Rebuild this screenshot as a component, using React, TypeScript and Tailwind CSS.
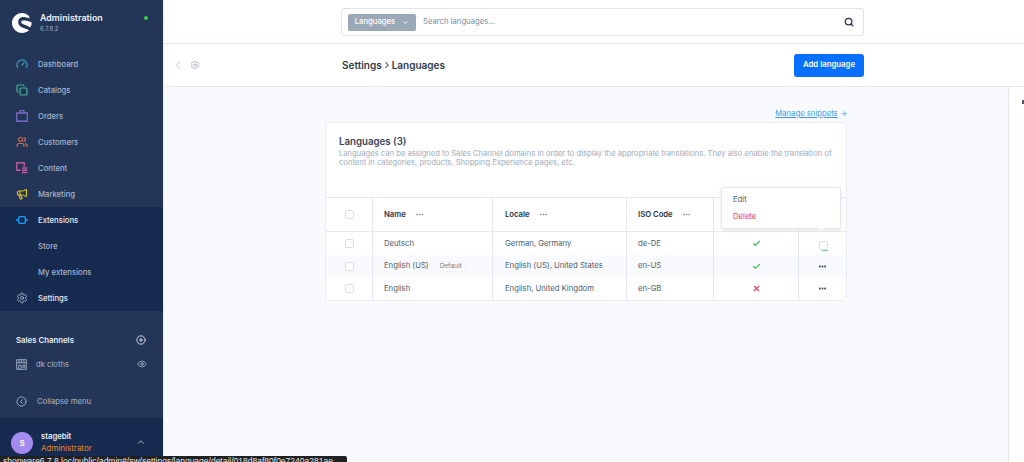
import { Check, ChevronDown, ChevronLeft, ChevronRight, ChevronUp, CircleChevronLeft, CirclePlus, Copy, Ellipsis, Eye, Gauge, Megaphone, Search, Settings, Users, X } from "lucide-react"
import type { ReactNode } from "react"

function BagIcon() {
  return (
    <svg viewBox="0 0 16 16" className="h-[12px] w-[12px]" fill="none" stroke="#7a68c9" strokeWidth="1.8">
      <path d="M1 4h14v11H1zM5 4V3a3 2.500 0 0 1 6 0v1" />
    </svg>
  )
}

function ContentIcon() {
  return (
    <svg viewBox="0 0 16 16" className="h-[12px] w-[12px]" fill="none" stroke="#c35a9f" strokeWidth="1.8">
      <path d="M6 11H1V1h10v5M8 8h7M8 11h7M8 14h7" />
    </svg>
  )
}

function PlugIcon() {
  return (
    <svg viewBox="0 0 16 16" className="h-[12px] w-[12px]" fill="none" stroke="#189eff" strokeWidth="1.8">
      <rect x="3.500" y="3.500" width="9" height="9" rx="2" />
      <path d="M0 8h3.500M12.500 8H16" />
    </svg>
  )
}

function ShopIcon() {
  return (
    <svg viewBox="0 0 16 16" className="h-[11px] w-[11px]" fill="none" stroke="#a5b4cb" strokeWidth="1.3">
      <path d="M1 1h14v14H1zM1 5.500h14M4.500 1v4.500M8 1v4.500M11.500 1v4.500M4 15V9h3.500v6M10 9h3v3h-3z" />
    </svg>
  )
}

function Logo() {
  return (
    <svg viewBox="0 0 20 20" className="h-[20px] w-[20px]">
      <path fill="#fff" d="M17 3C15 1 12.500 0 10 0 4.500 0 0 4.500 0 10s4.500 10 10 10c2.500 0 5-1 7-2.800-3-2-8-2.200-10-5.200C5 8 7 4 11 4c2 0 4.500.5 6.500 1.500z" />
      <path fill="#fff" d="M11 7.500c-2 0-2.500 2-1 3 2.500 1.500 5.500 2 8 4 1.500-2 2-4 1.500-5-2.500-1.500-5.500-2-8.500-2z" />
    </svg>
  )
}

function NavRow({ icon, label, active }: { icon?: ReactNode; label: string; active?: boolean }) {
  return (
    <div className="flex h-[26px] items-center pl-[16px]">
      <span className="flex w-[22px] items-center pr-[10px]">{icon}</span>
      <span className={`pt-[1px] text-[7.700px] font-medium ${active ? "text-[#e6ebf2]" : "text-[#a5b4cb]"}`}>{label}</span>
    </div>
  )
}

function HeaderCell({ label, className }: { label: string; className: string }) {
  return (
    <div className={`flex items-center gap-[9px] border-l border-[#e4e8ee] ${className}`}>
      <span className="text-[7.700px] font-semibold text-[#27344a]">{label}</span>
      <Ellipsis className="h-[9px] w-[9px] text-[#6b7a90]" />
    </div>
  )
}

function Box() {
  return <span className="block h-[9px] w-[9px] rounded-[2px] border border-[#d9dfe7] bg-white" />
}

const rows = [
  { name: "Deutsch", locale: "German, Germany", iso: "de-DE", active: true, bg: "bg-white" },
  { name: "English (US)", locale: "English (US), United States", iso: "en-US", active: true, bg: "bg-[#f9fafd]", isDefault: true },
  { name: "English", locale: "English, United Kingdom", iso: "en-GB", active: false, bg: "bg-white" },
]

export default function App() {
  return (
    <div className="relative flex h-[462px] w-[1024px] overflow-hidden bg-white font-['Inter',sans-serif]">
      <aside className="flex h-full w-[164px] shrink-0 flex-col border-r border-[#e6eaf2] bg-[#243657]">
        <div className="flex h-[51px] items-start pl-[12px] pt-[13px]">
          <Logo />
          <div className="ml-[8px] mt-[1px] leading-none">
            <div className="text-[8.900px] font-semibold text-[#eef1f6]">Administration</div>
            <div className="mt-[3px] text-[6px] text-[#a5b4cb]">6.7.8.2</div>
          </div>
          <span className="ml-[41px] mt-[3px] h-[4px] w-[4px] rounded-full bg-[#37d046]" />
        </div>
        <NavRow icon={<Gauge className="h-[12px] w-[12px] text-[#3f9bbd]" strokeWidth={2.4} />} label="Dashboard" />
        <NavRow icon={<Copy className="h-[12px] w-[12px] text-[#3fb58f]" strokeWidth={2.4} />} label="Catalogs" />
        <NavRow icon={<BagIcon />} label="Orders" />
        <NavRow icon={<Users className="h-[12px] w-[12px] text-[#c9725a]" strokeWidth={2.4} />} label="Customers" />
        <NavRow icon={<ContentIcon />} label="Content" />
        <NavRow icon={<Megaphone className="h-[12px] w-[12px] text-[#d6bd1f]" strokeWidth={2.4} />} label="Marketing" />
        <div className="bg-[#172a4f]">
          <NavRow icon={<PlugIcon />} label="Extensions" active />
          <NavRow label="Store" />
          <NavRow label="My extensions" />
          <NavRow icon={<Settings className="h-[12px] w-[12px] text-[#a5b4cb]" strokeWidth={1.8} />} label="Settings" active />
        </div>
        <div className="flex h-[107px] flex-col pl-[16px] pt-[22px]">
          <div className="flex h-[14px] items-center justify-between pr-[17px]">
            <span className="pt-[1px] text-[7.800px] font-semibold text-[#e6ebf2]">Sales Channels</span>
            <CirclePlus className="h-[10px] w-[10px] text-[#e6ebf2]" />
          </div>
          <div className="mt-[10px] flex h-[14px] items-center pr-[16px]">
            <ShopIcon />
            <span className="ml-[9px] flex-1 pt-[1px] text-[7.700px] text-[#a5b4cb]">dk cloths</span>
            <Eye className="h-[10px] w-[10px] text-[#a5b4cb]" />
          </div>
          <div className="mt-[23px] flex h-[14px] items-center">
            <CircleChevronLeft className="h-[11px] w-[11px] text-[#a5b4cb]" />
            <span className="ml-[10px] pt-[1px] text-[7.700px] text-[#a5b4cb]">Collapse menu</span>
          </div>
        </div>
        <div className="flex flex-1 items-start bg-[#172a4f] pl-[11px] pt-[14px]">
          <span className="flex h-[22px] w-[22px] items-center justify-center rounded-full bg-[#a58af0] text-[8px] font-semibold text-white">S</span>
          <div className="ml-[8px] w-[92px] leading-none">
            <div className="mt-[1px] text-[7.700px] font-semibold text-[#eef1f6]">stagebit</div>
            <div className="mt-[3px] text-[8px] text-[#e8891c]">Administrator</div>
          </div>
          <ChevronUp className="ml-[3px] mt-[5px] h-[10px] w-[10px] text-[#c3cddc]" />
        </div>
      </aside>

      <main className="flex min-w-0 flex-1 flex-col">
        <div className="flex h-[44px] shrink-0 border-b border-[#e4e8ee] pl-[177px] pt-[8px]">
          <div className="flex h-[28px] w-[523px] items-center rounded-[3px] border border-[#dfe4eb] pl-[6px] pr-[9px]">
            <span className="flex h-[17px] w-[68px] items-center justify-center gap-[7px] rounded-[2px] bg-[#9aa8b8] text-[7.700px] font-medium text-white">
              Languages
              <ChevronDown className="h-[7px] w-[7px]" strokeWidth={3} />
            </span>
            <span className="ml-[7px] flex-1 text-[7.700px] text-[#7d8b9e]">Search languages...</span>
            <Search className="h-[10px] w-[10px] text-[#27344a]" strokeWidth={3} />
          </div>
        </div>
        <div className="flex h-[43px] shrink-0 items-center border-b border-[#e4e8ee] pl-[7px]">
          <ChevronLeft className="h-[14px] w-[14px] text-[#b3bfcd]" strokeWidth={1.5} />
          <Settings className="ml-[5px] h-[10px] w-[10px] text-[#a9b5c4]" />
          <div className="ml-[142px] flex w-[452px] items-center text-[10px] font-semibold text-[#303b4b]">
            Settings
            <ChevronRight className="h-[10px] w-[10px]" strokeWidth={2.5} />
            Languages
          </div>
          <button className="h-[23px] w-[70px] rounded-[3px] bg-[#0870ff] text-[7.800px] font-semibold text-white">Add language</button>
        </div>
        <div className="flex min-h-0 flex-1 bg-[#f9fafd]">
          <div className="flex-1 pl-[161px]">
            <div className="flex h-[35px] w-[522px] items-start justify-end pt-[21px]">
              <span className="text-[7.700px] leading-[12px] text-[#3d9bf5] underline">Manage snippets</span>
              <span className="ml-[2px] text-[7.700px] leading-[12px] text-[#3d9bf5]">→</span>
            </div>
            <div className="relative w-[522px] rounded-[4px] border border-[#e8ebf1] bg-white">
              <div className="h-[74px] pl-[13px] pr-[10px] pt-[12px]">
                <h2 className="text-[9.700px] font-semibold leading-[13px] text-[#3a4658]">Languages (3)</h2>
                <p className="mt-[1px] text-[7.630px] leading-[9px] text-[#9eabbc]">
                  Languages can be assigned to Sales Channel domains in order to display the appropriate translations. They also enable the translation of content in categories, products, Shopping Experience pages, etc.
                </p>
              </div>
              <div className="flex h-[35px] border-y border-[#e4e8ee]">
                <div className="flex w-[46px] items-center justify-center">
                  <Box />
                </div>
                <HeaderCell label="Name" className="w-[120px] pl-[11px]" />
                <HeaderCell label="Locale" className="w-[134px] pl-[12px]" />
                <HeaderCell label="ISO Code" className="w-[87px] pl-[11px]" />
                <div className="w-[85px] border-l border-[#e4e8ee]" />
                <div className="flex-1 border-l border-[#e4e8ee]" />
              </div>
              {rows.map((row, i) => (
                <div key={row.iso} className={`flex h-[22.700px] items-center text-[7.700px] text-[#4d5a6c] ${row.bg}`}>
                  <div className="flex w-[46px] items-center justify-center">
                    <Box />
                  </div>
                  <div className="flex h-full w-[120px] items-center gap-[6px] border-l border-[#e4e8ee] pl-[11px]">
                    {row.name}
                    {row.isDefault && <span className="rounded-[2px] border border-[#f1f3f7] bg-[#f9fafd] px-[4px] text-[6.500px] leading-[9px] text-[#6b7a90]">Default</span>}
                  </div>
                  <div className="flex h-full w-[134px] items-center border-l border-[#e4e8ee] pl-[12px]">{row.locale}</div>
                  <div className="flex h-full w-[87px] items-center border-l border-[#e4e8ee] pl-[11px]">{row.iso}</div>
                  <div className="flex h-full w-[85px] items-center justify-center border-l border-[#e4e8ee]">
                    {row.active ? <Check className="h-[9px] w-[9px] text-[#37c653]" strokeWidth={3} /> : <X className="h-[9px] w-[9px] text-[#e8395f]" strokeWidth={3} />}
                  </div>
                  <div className="flex h-full flex-1 items-center justify-center border-l border-[#e4e8ee]">
                    {i === 0 ? (
                      <span className="relative ml-[1px] mt-[4px] block h-[9px] w-[9px] rounded-[2px] border border-[#d9dfe7]">
                        <span className="absolute -bottom-[2px] left-[2px] h-[1px] w-[6px] bg-[#6fd487]" />
                      </span>
                    ) : (
                      <Ellipsis className="h-[9px] w-[9px] text-[#27344a]" strokeWidth={3} />
                    )}
                  </div>
                </div>
              ))}
              <div className="absolute left-[395px] top-[64px] h-[42px] w-[120px] rounded-[3px] border border-[#e4e8ee] bg-white pl-[11px] pt-[4px] text-[7.700px] leading-[16.500px] shadow-sm">
                <div className="text-[#4d5a6c]">Edit</div>
                <div className="text-[#ef4058]">Delete</div>
                <span className="absolute left-[97px] top-[38px] h-[5px] w-[5px] rotate-45 border-b border-r border-[#e4e8ee] bg-white" />
              </div>
            </div>
          </div>
          <div className="relative w-[16px] shrink-0 border-l border-[#e4e8ee] bg-white">
            <span className="absolute left-[13px] top-[13px] h-[4px] w-[2px] bg-[#4d5a6c]" />
          </div>
        </div>
      </main>

      <div className="absolute bottom-0 left-0 h-[6px] w-[347px] overflow-hidden rounded-tr-[2px] bg-[#1f2123] pl-[3px] font-['Liberation_Sans',sans-serif] text-[8.500px] leading-[10px] text-[#e8e8e8]">
        <span className="whitespace-nowrap">shopware6.7.8.loc/public/admin#/sw/settings/language/detail/018d8af80f0e7240a281ae</span>
      </div>
    </div>
  )
}
